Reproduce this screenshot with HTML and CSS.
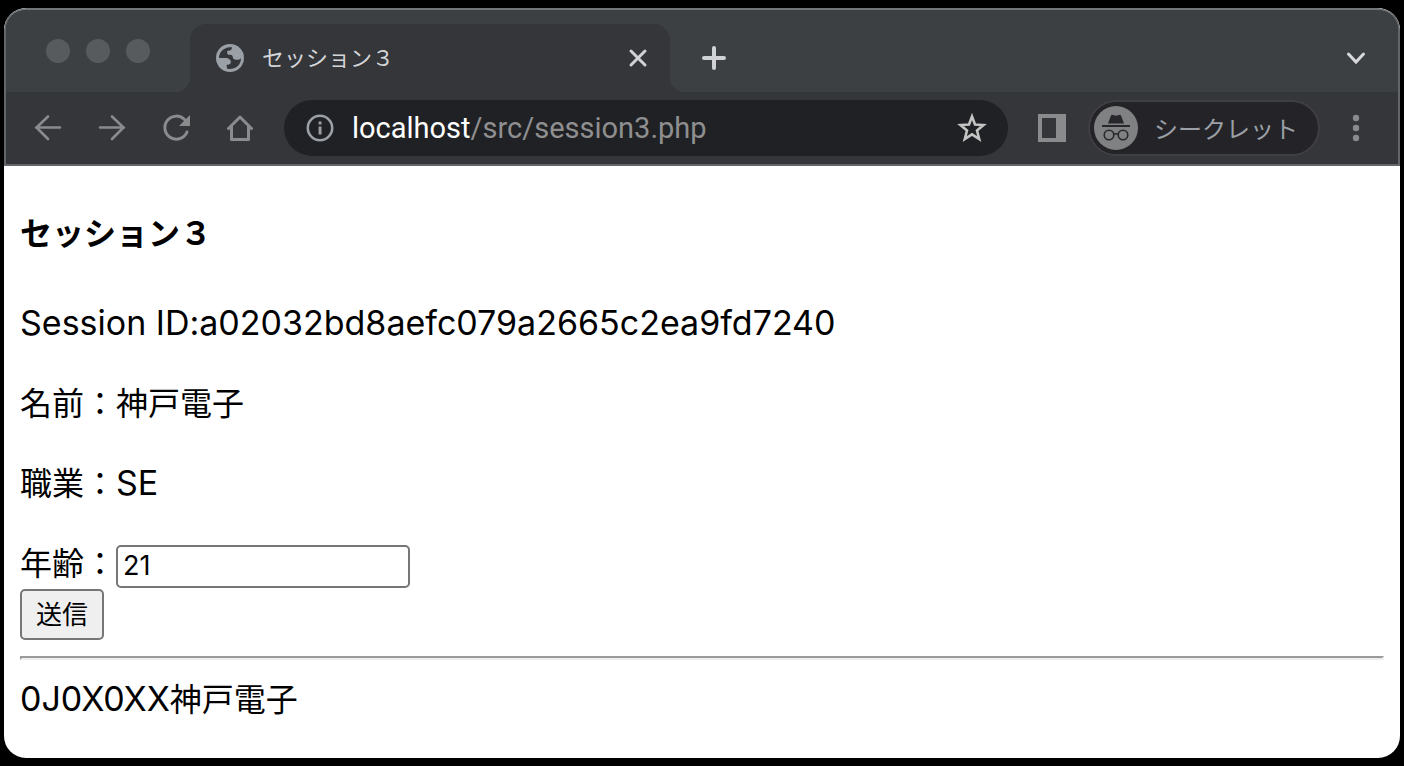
FILE: index.html
```html
<!DOCTYPE html>
<html lang="ja">
<head>
<meta charset="utf-8">
<title>セッション３</title>
<link rel="stylesheet" href="styles.css">
</head>
<body>
<div class="window">
  <header class="chrome">
    <div class="tabstrip">
      <div class="lights"><span class="light"></span><span class="light"></span><span class="light"></span></div>
      <div class="tab">
        <svg class="globe" viewBox="0 0 84 84" width="28" height="28" aria-hidden="true">
          <circle cx="42" cy="42" r="42" fill="#9aa0a6"/>
          <path d="M9 39C11 22 26 9 47 9C49 16 45 20 36 20C31 20 34 29 37 33C46 31 51 34 51 43C58 49 68 49 75 43C75 63 59 77 35 75C32 71 32 67 32 62C43 62 46 57 44 50C40 43 34 42 26 42H9Z" fill="#35363a"/>
        </svg>
        <span class="tab-title">セッション３</span>
        <button class="icon-btn" aria-label="閉じる"><svg viewBox="0 0 28 28" width="28" height="28"><path d="M7 7L21 21M21 7L7 21" stroke="#d0d3d6" stroke-width="3" stroke-linecap="round"/></svg></button>
      </div>
      <button class="icon-btn new-tab" aria-label="新しいタブ"><svg viewBox="0 0 28 28" width="28" height="28"><path d="M14 4V24M4 14H24" stroke="#cfd1d4" stroke-width="4" stroke-linecap="round"/></svg></button>
      <button class="icon-btn tab-search" aria-label="タブを検索"><svg viewBox="0 0 28 28" width="28" height="28"><path d="M6.500 10L14 18L21.500 10" fill="none" stroke="#d8d9db" stroke-width="3"  stroke-linecap="round"/></svg></button>
    </div>
    <div class="toolbar">
      <nav class="nav">
        <button class="icon-btn" aria-label="戻る"><svg viewBox="0 0 28 28" width="28" height="28"><path d="M26 13.500H2M14 2.500L2.500 13.500L14 25" fill="none" stroke="#8a8b8d" stroke-width="2.600" stroke-linecap="round"/></svg></button>
        <button class="icon-btn" aria-label="進む"><svg viewBox="0 0 28 28" width="28" height="28"><path d="M2 13.500H26M14 2.500L25.500 13.500L14 25" fill="none" stroke="#8a8b8d" stroke-width="2.600" stroke-linecap="round"/></svg></button>
        <button class="icon-btn" aria-label="再読み込み"><svg viewBox="0 0 28 28" width="28" height="28"><path d="M22.500 5.500A11.500 11.500 0 1 0 25 18" fill="none" stroke="#8a8b8d" stroke-width="3" stroke-linecap="round"/><path d="M28 1V12H17Z" fill="#8a8b8d"/></svg></button>
        <button class="icon-btn" aria-label="ホーム"><svg viewBox="0 0 28 28" width="28" height="28"><path d="M2.500 14.500L14 3L25.500 14.500M5.500 12.500V25.500H22.500V12.500" fill="none" stroke="#8a8b8d" stroke-width="3" stroke-linecap="round" stroke-linejoin="round"/></svg></button>
      </nav>
      <div class="omnibox">
        <svg viewBox="0 0 28 28" width="28" height="28" aria-hidden="true"><circle cx="14" cy="14" r="12.200" fill="none" stroke="#9aa0a6" stroke-width="2.600"/><path d="M12.600 7.600H15.500V10.500H12.600ZM12.600 12.500H15.500V20.500H12.600Z" fill="#9aa0a6"/></svg>
        <a class="url" href="#"><span class="host">localhost</span>/src/session3.php</a>
        <button class="icon-btn" aria-label="ブックマーク"><svg viewBox="0 0 32 32" width="32" height="32"><path d="M16 4.500L19 12.500L27.500 13L21 18.500L23.200 27L16 22.300L8.800 27L11 18.500L4.500 13L13 12.500Z" fill="none" stroke="#c4c4c4" stroke-width="2.600"/></svg></button>
      </div>
      <button class="icon-btn panel-btn" aria-label="サイドパネル"><svg viewBox="0 0 28 28" width="28" height="28"><path d="M0 0H28V28H0ZM4 4V24H18V4Z" fill="#8a8b8d" fill-rule="evenodd"/></svg></button>
      <button class="incognito">
        <svg viewBox="0 0 44 44" width="44" height="44" aria-hidden="true"><circle cx="22" cy="22" r="22" fill="#808183"/><path d="M14 17.500L17 9.500Q17.500 8.500 19 9L22 9.800L25 9Q26.500 8.500 27 9.500L30 17.500ZM8 19H36V21H8Z" fill="#28282c"/><circle cx="15" cy="29" r="4.800" fill="none" stroke="#28282c" stroke-width="1.600"/><circle cx="29" cy="29" r="4.800" fill="none" stroke="#28282c" stroke-width="1.600"/><path d="M19.500 28.500Q22 27 24.500 28.500" fill="none" stroke="#28282c" stroke-width="1.600"/></svg>
        <span class="incognito-label">シークレット</span>
      </button>
      <button class="icon-btn menu-btn" aria-label="メニュー"><svg viewBox="0 0 28 28" width="28" height="28"><g fill="#8a8b8d"><circle cx="14" cy="4" r="3.200"/><circle cx="14" cy="14" r="3.200"/><circle cx="14" cy="24" r="3.200"/></g></svg></button>
    </div>
  </header>
  <main class="page">
    <h4 class="title">セッション３</h4>
    <p class="line"><span class="latin">Session ID:a02032bd8aefc079a2665c2ea9fd7240</span></p>
    <p class="line">名前：神戸電子</p>
    <p class="line">職業：<span class="latin">SE</span></p>
    <form class="form">
      <div class="field"><label for="age">年齢：</label><input class="age" id="age" type="text" value="21"></div>
      <button class="submit" type="button">送信</button>
    </form>
    <hr class="rule">
    <p class="result"><span class="latin">0J0X0XX</span>神戸電子</p>
  </main>
</div>
</body>
</html>
```

FILE: styles.css
```css
* { box-sizing: border-box; }

body {
  margin: 0;
  padding: 8px 4px;
  min-height: 100vh;
  display: flex;
  background: #000;
  font-family: Inter, "Noto Sans CJK JP", sans-serif;
}

.window {
  flex: 1;
  min-width: 0;
  display: flex;
  flex-direction: column;
  border-radius: 22px;
  overflow: hidden;
  background: #fff;
}

.chrome {
  border: 2px solid #636669;
  border-top-color: #717578;
  border-radius: 22px 22px 0 0;
  background: #35363a;
}

.icon-btn {
  display: flex;
  flex: none;
  padding: 0;
  border: 0;
  background: none;
}

.tabstrip {
  display: flex;
  align-items: flex-end;
  height: 82px;
  background: #3c4043;
  border-radius: 20px 20px 0 0;
}

.lights {
  display: flex;
  align-self: stretch;
  width: 184px;
  padding: 29px 0 0 40px;
  gap: 16px;
}

.light {
  width: 24px;
  height: 24px;
  border-radius: 50%;
  background: #575b5e;
}

.tab {
  position: relative;
  display: flex;
  align-items: center;
  width: 480px;
  height: 68px;
  padding: 0 18px 0 26px;
  border-radius: 16px 16px 0 0;
  background: #35363a;
}

.tab::before,
.tab::after {
  content: "";
  position: absolute;
  bottom: 0;
  width: 16px;
  height: 16px;
}

.tab::before {
  right: 100%;
  background: radial-gradient(circle at 0 0, #3c4043 16px, #35363a 17px);
}

.tab::after {
  left: 100%;
  background: radial-gradient(circle at 100% 0, #3c4043 16px, #35363a 17px);
}

.tab-title {
  flex: 1;
  margin-left: 18px;
  padding-bottom: 4px;
  font-size: 22px;
  color: #d4d5d7;
}

.new-tab {
  margin: 0 0 20px 30px;
}

.tab-search {
  margin: 0 28px 20px auto;
}

.toolbar {
  display: flex;
  align-items: center;
  height: 72px;
}

.nav {
  display: flex;
  gap: 36px;
  padding-left: 28px;
}

.omnibox {
  flex: 1;
  display: flex;
  align-items: center;
  height: 56px;
  margin-left: 30px;
  padding: 0 20px 0 22px;
  border-radius: 28px;
  background: #202124;
}

.url {
  flex: 1;
  margin-left: 18px;
  font-family: Roboto, sans-serif;
  font-size: 29px;
  color: #8f8f90;
  text-decoration: none;
}

.host {
  color: #fff;
}

.panel-btn {
  margin-left: 30px;
}

.incognito {
  display: flex;
  align-items: center;
  gap: 16px;
  height: 56px;
  margin-left: 22px;
  padding: 0 20px 0 4px;
  border: 2px solid #3f3f43;
  border-radius: 28px;
  background: #242428;
  color: #9aa0a6;
  font-family: "Noto Sans CJK JP", sans-serif;
  font-size: 24px;
}

.incognito-label {
  padding-bottom: 2px;
}

.menu-btn {
  margin: 0 28px 0 22px;
}

.page {
  flex: 1;
  padding: 44px 16px 32px;
  font-size: 32px;
  line-height: 48px;
  color: #000;
}

.title {
  margin: 0 0 42px;
  font-size: 32px;
}

.line {
  margin: 0 0 32px;
}

.latin {
  font-size: 34px;
  line-height: 1;
}

.field {
  display: flex;
  align-items: flex-end;
}

.age {
  width: 294px;
  height: 43px;
  padding: 0 5px 2px;
  border: 2px solid #767676;
  border-radius: 5px;
  background: #fff;
  color: #000;
  font-family: Inter, sans-serif;
  font-size: 27px;
}

.submit {
  display: block;
  height: 51px;
  margin-top: 1px;
  padding: 0 14px 4px;
  border: 2px solid #767676;
  border-radius: 5px;
  background: #efefef;
  color: #000;
  font-family: "Noto Sans CJK JP", sans-serif;
  font-size: 26px;
  line-height: 43px;
}

.rule {
  margin: 16px 0;
  border: 2px inset #eee;
}

.result {
  margin: 0;
}
```
